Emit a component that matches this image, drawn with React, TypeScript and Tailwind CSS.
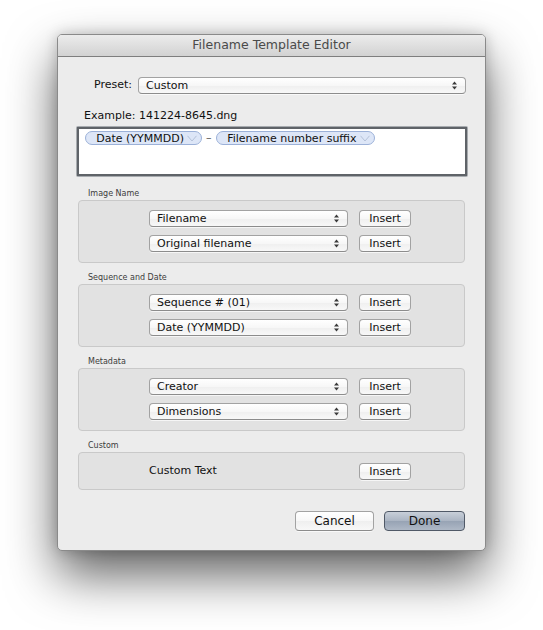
import React from 'react';

const selectBg =
  'bg-[linear-gradient(to_bottom,#ffffff_0%,#f7f7f7_50%,#efefef_51%,#f8f8f8_100%)]';

const Arrows: React.FC = () => (
  <svg width="5" height="9" viewBox="0 0 5 9" className="shrink-0">
    <path d="M2.5 0.5 L5 3.5 L0 3.5 Z" fill="#3a3a3a" />
    <path d="M2.5 8.5 L5 5.5 L0 5.5 Z" fill="#3a3a3a" />
  </svg>
);

interface PopupProps {
  label: string;
  className?: string;
}

const Popup: React.FC<PopupProps> = ({ label, className = '' }) => (
  <div
    className={`flex h-[17px] shrink-0 items-center justify-between rounded-[4px] border border-[#a2a2a2] border-b-[#8c8c8c] pl-[7px] pr-[8px] text-[11px] leading-none text-[#111] shadow-[0_1px_0_rgba(255,255,255,0.7)] ${selectBg} ${className}`}
  >
    <span>{label}</span>
    <Arrows />
  </div>
);

const PushButton: React.FC<{ label: string; className?: string }> = ({
  label,
  className = '',
}) => (
  <button
    className={`flex shrink-0 items-center justify-center rounded-[4px] border border-[#a2a2a2] border-b-[#8c8c8c] text-[11px] leading-none text-[#111] shadow-[0_1px_0_rgba(255,255,255,0.7)] ${selectBg} ${className}`}
  >
    {label}
  </button>
);

const Chevron: React.FC = () => (
  <svg width="10" height="7" viewBox="0 0 10 7" className="shrink-0">
    <path d="M0.5 0.8 L5 6 L9.5 0.8" fill="none" stroke="#b4c1d8" strokeWidth="1" />
  </svg>
);

const Token: React.FC<{ label: string; width: string }> = ({ label, width }) => (
  <div
    className={`flex h-[14px] items-center justify-end gap-[3px] rounded-full border border-[#9cb1d8] bg-[#dde6f7] pr-[4px] text-[11px] leading-none text-[#111] ${width}`}
  >
    <span>{label}</span>
    <Chevron />
  </div>
);

interface GroupProps {
  title: string;
  children: React.ReactNode;
}

const Group: React.FC<GroupProps> = ({ title, children }) => (
  <div className="flex flex-col">
    <div className="h-[10px] pl-[10px] text-[8px] leading-[10px] text-[#3c3c3c]">{title}</div>
    <div className="mt-px rounded-[4px] border border-[#c9c9c9] bg-[#e2e2e2] pl-[70px]">
      {children}
    </div>
  </div>
);

const Row: React.FC<{ choice: string }> = ({ choice }) => (
  <div className="flex h-[17px] items-center gap-[11px]">
    <Popup label={choice} className="w-[199px]" />
    <PushButton label="Insert" className="h-[17px] w-[52px]" />
  </div>
);

export default function App() {
  return (
    <div className="h-[630px] w-[543px] overflow-hidden bg-white pl-[57px] pt-[34px] font-['DejaVu_Sans',sans-serif]">
      <div className="flex h-[517px] w-[429px] flex-col overflow-hidden rounded-[5px] border border-[#8a8a8a] bg-[#ececec] shadow-[0_24px_50px_rgba(0,0,0,0.62),0_0_14px_rgba(0,0,0,0.2)]">
        {/* title bar */}
        <div className="flex h-[22px] shrink-0 items-center justify-center border-b border-[#7e7e7e] bg-[linear-gradient(to_bottom,#ececec,#d2d2d2)] text-[12.5px] text-[#4a4a4a]">
          Filename Template Editor
        </div>

        <div className="flex flex-1 flex-col px-[19px] pt-[20px]">
          {/* preset */}
          <div className="flex h-[17px] items-center">
            <span className="w-[61px] pr-[6px] text-right text-[11px] text-[#111]">Preset:</span>
            <Popup label="Custom" className="w-[328px]" />
          </div>

          <div className="mt-[15px] h-[14px] pl-[7px] text-[11px] leading-[14px] text-[#111]">
            Example: 141224-8645.dng
          </div>

          {/* token field */}
          <div className="ml-[-1px] mt-[3px] w-[392px] rounded-[2px] bg-[#a7abaf] p-px">
            <div className="flex h-[49px] items-start gap-[4px] border-2 border-[#5f6368] bg-white pl-[6px] pt-[2px]">
              <Token label="Date (YYMMDD)" width="w-[117px]" />
              <span className="text-[11px] leading-[14px] text-[#555]">–</span>
              <Token label="Filename number suffix" width="w-[159px]" />
            </div>
          </div>

          <div className="mt-[12px] flex w-[388px] flex-col gap-[10px] pl-px">
            <Group title="Image Name">
              <div className="flex flex-col gap-[8px] pb-[10px] pt-[9px]">
                <Row choice="Filename" />
                <Row choice="Original filename" />
              </div>
            </Group>
            <Group title="Sequence and Date">
              <div className="flex flex-col gap-[8px] pb-[10px] pt-[9px]">
                <Row choice="Sequence # (01)" />
                <Row choice="Date (YYMMDD)" />
              </div>
            </Group>
            <Group title="Metadata">
              <div className="flex flex-col gap-[8px] pb-[10px] pt-[9px]">
                <Row choice="Creator" />
                <Row choice="Dimensions" />
              </div>
            </Group>
            <Group title="Custom">
              <div className="flex h-[36px] items-center justify-between pr-[53px]">
                <span className="text-[11px] text-[#111]">Custom Text</span>
                <PushButton label="Insert" className="h-[17px] w-[52px]" />
              </div>
            </Group>
          </div>

          {/* footer buttons */}
          <div className="mt-[21px] flex justify-end gap-[10px] pr-px">
            <PushButton label="Cancel" className="h-[20px] w-[79px] text-[12px]" />
            <button className="flex h-[20px] w-[81px] items-center justify-center rounded-[4px] border border-[#505967] bg-[linear-gradient(to_bottom,#c8cfd9_0%,#aab4c2_50%,#97a3b4_51%,#aeb8c6_100%)] text-[12px] leading-none text-[#111]">
              Done
            </button>
          </div>
        </div>
      </div>
    </div>
  );
}
